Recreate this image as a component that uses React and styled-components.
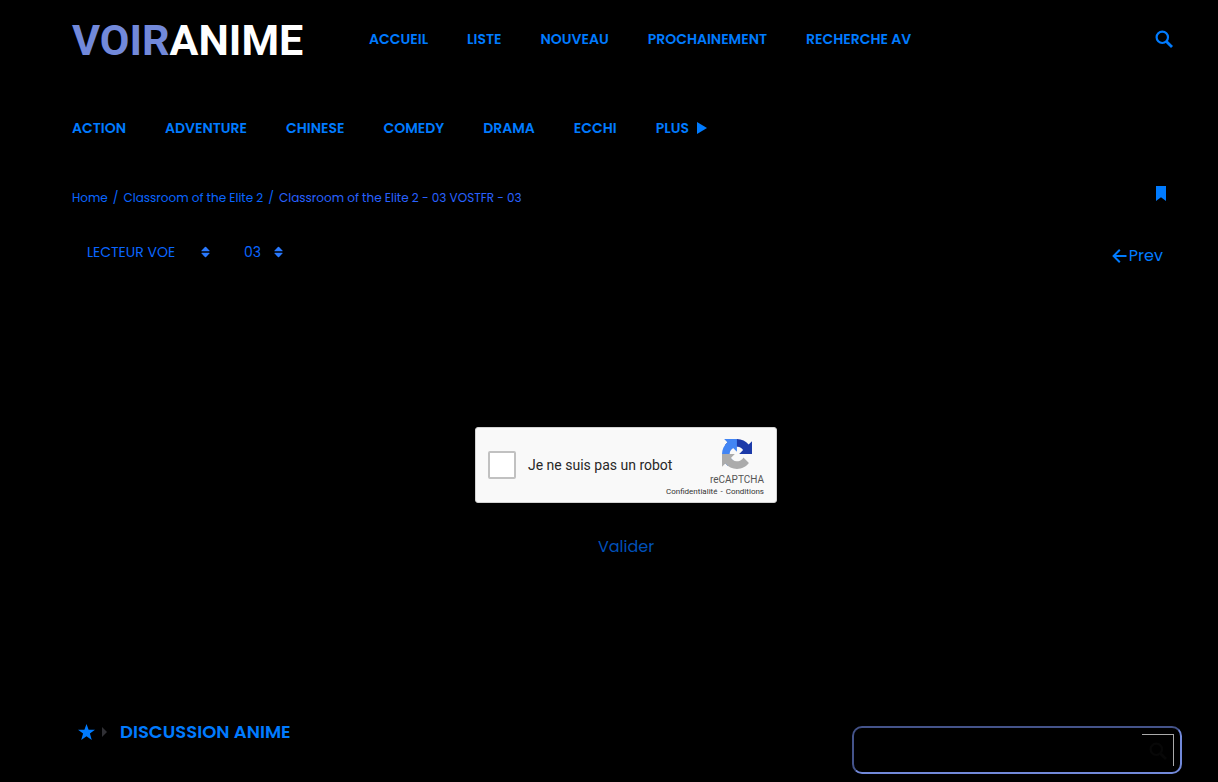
import React from "react";
import styled, { createGlobalStyle } from "styled-components";

const GlobalStyle = createGlobalStyle`
  * { box-sizing: border-box; }
  body {
    margin: 0;
    background: #000;
    color: #007bff;
    font-family: Poppins, Inter, "Open Sans", sans-serif;
    font-size: 14px;
  }
  a { color: inherit; text-decoration: none; }
  button, select, input { font: inherit; color: inherit; }
`;

const Page = styled.div`
  padding: 0 36px 0 72px;
`;

const Header = styled.header`
  display: flex;
  align-items: center;
  height: 78px;
`;

const Logo = styled.a`
  width: 232px;
  margin-right: 65px;
  padding-top: 2px;
  font-family: Roboto, sans-serif;
  font-size: 43px;
  line-height: 52px;
  font-weight: 700;
  color: #fff;
  white-space: nowrap;
`;

const LogoAccent = styled.span`
  color: #7289da;
`;

const Menu = styled.nav`
  display: flex;
  align-items: center;
  gap: 39px;
  font-size: 14px;
  line-height: 20px;
  font-weight: 600;
  white-space: nowrap;
`;

const GenreBar = styled.div`
  display: flex;
  align-items: center;
  height: 100px;
`;

const MoreLink = styled.a`
  display: flex;
  align-items: center;
  gap: 8px;
`;

const IconButton = styled.button`
  display: flex;
  padding: 0;
  border: 0;
  background: none;
  cursor: pointer;
`;

const SearchToggle = styled(IconButton)`
  margin: 0 9px 0 auto;
`;

const TitleBar = styled.div`
  display: flex;
  justify-content: space-between;
  align-items: flex-start;
  height: 54px;
  padding: 8px 16px 0 0;
`;

const Breadcrumb = styled.nav`
  display: flex;
  gap: 5px;
  padding-top: 2px;
  font-size: 12px;
  line-height: 20px;
  color: #0a66ff;
`;

const Current = styled.span`
  color: #2962ff;
`;

const PlayerBar = styled.div`
  display: flex;
  align-items: flex-start;
  gap: 9px;
  padding-right: 19px;
`;

const SelectBox = styled.label`
  display: grid;
  align-items: center;
  width: ${(p) => p.$width};
  height: 40px;

  > * { grid-area: 1 / 1; }
  > svg { justify-self: end; margin-right: 10px; pointer-events: none; }
`;

const Select = styled.select`
  appearance: none;
  width: 100%;
  height: 40px;
  padding: 0 0 0 15px;
  border: 0;
  background: #000;
  color: #0a66ff;
  font-size: 14px;
`;

const PrevLink = styled.a`
  display: flex;
  align-items: center;
  gap: 2px;
  margin: 12px 0 0 auto;
  font-size: 16px;
  line-height: 24px;
`;

const Player = styled.form`
  display: flex;
  flex-direction: column;
  align-items: center;
  gap: 32px;
  padding: 155px 2px 160px 0;
`;

const Captcha = styled.div`
  display: flex;
  width: 302px;
  height: 76px;
  padding: 0 12px;
  border: 1px solid #d3d3d3;
  border-radius: 3px;
  background: #f9f9f9;
  color: #282727;
  font-family: Roboto, sans-serif;
`;

const CaptchaLabel = styled.label`
  display: flex;
  align-items: center;
  gap: 12px;
  font-size: 14px;
  line-height: 18px;
  white-space: nowrap;
`;

const CaptchaCheck = styled.input`
  appearance: none;
  width: 28px;
  height: 28px;
  margin: 0;
  border: 2px solid #c1c1c1;
  border-radius: 2px;
  background: #fff;
`;

const CaptchaBrand = styled.div`
  display: flex;
  flex-direction: column;
  align-items: flex-end;
  margin-left: auto;
  padding-top: 11px;
  color: #555;

  > svg { margin-right: 12px; }
`;

const BrandName = styled.span`
  margin-top: 5px;
  font-size: 10px;
  line-height: 12px;
`;

const Legal = styled.span`
  display: flex;
  gap: 3px;
  width: max-content;
  margin-left: -60px;
  font-size: 8px;
  line-height: 12px;
  color: #333;
`;

const Submit = styled.button`
  padding: 0;
  border: 0;
  background: none;
  font-size: 16px;
  line-height: 24px;
  color: #0050b8;
`;

const Footer = styled.footer`
  display: flex;
  justify-content: space-between;
  align-items: flex-start;
`;

const Heading = styled.h2`
  display: flex;
  align-items: center;
  margin: 0;
  padding: 0 0 0 6px;
  font-size: 18px;
  line-height: 26px;
  font-weight: 600;

  > svg:first-child { margin-right: 7px; }
  > svg:nth-child(2) { margin-right: 13px; }
`;

const SearchBox = styled.div`
  display: flex;
  width: 330px;
  height: 48px;
  margin-top: 7px;
  padding: 6px;
  border: 2px solid;
  border-color: #44538a #7289da #7289da #44538a;
  border-radius: 10px;
`;

const SearchInput = styled.input`
  flex: 1;
  min-width: 0;
  border: 0;
  outline: 0;
  background: transparent;
`;

const SearchSubmit = styled.button`
  display: grid;
  place-items: center;
  width: 32px;
  height: 32px;
  padding: 0;
  border: 0 solid #aaa;
  border-width: 1px 1px 0 0;
  background: #000;
  color: #070707;
`;

const SearchIcon = () => (
  <svg width="18" height="18" viewBox="0 0 18 18" fill="none" stroke="currentColor" strokeWidth="2.2" aria-hidden="true">
    <circle cx="7.3" cy="7.3" r="5.7" />
    <path d="M11.4 11.4L17 17" strokeWidth="2.8" />
  </svg>
);

const SortIcon = () => (
  <svg width="9" height="12" viewBox="0 0 10 12" fill="#2979ff" aria-hidden="true">
    <path d="M1 5.2Q0 5.2 .6 4.3L4.4.5Q5 0 5.6.5L9.4 4.3Q10 5.2 9 5.2ZM1 6.8Q0 6.8.6 7.7L4.4 11.5Q5 12 5.6 11.5L9.4 7.7Q10 6.8 9 6.8Z" />
  </svg>
);

const CaptchaLogo = () => (
  <svg width="30" height="30" viewBox="0 0 64 64" aria-hidden="true">
    <path fill="#1c3aa9" d="M64 31.955l-.033-1.37V4.687l-7.16 7.16C50.948 4.674 42.033.093 32.05.093c-10.4 0-19.622 4.96-25.458 12.64l11.736 11.86a15.55 15.55 0 0 1 4.754-5.334c2.05-1.6 4.952-2.906 8.968-2.906.485 0 .86.057 1.135.163 4.976.393 9.288 3.14 11.828 7.124l-8.307 8.307L64 31.953" />
    <path fill="#4285f4" d="M31.862.094l-1.37.033H4.594l7.16 7.16C4.58 13.147 0 22.06 0 32.046c0 10.4 4.96 19.622 12.64 25.458L24.5 45.768a15.55 15.55 0 0 1-5.334-4.754c-1.6-2.05-2.906-4.952-2.906-8.968 0-.485.057-.86.163-1.135.393-4.976 3.14-9.288 7.124-11.828l8.307 8.307L31.86.095" />
    <path fill="#ababab" d="M.001 32.045l.033 1.37v25.898l7.16-7.16c5.86 7.173 14.774 11.754 24.76 11.754 10.4 0 19.622-4.96 25.458-12.64l-11.736-11.86a15.55 15.55 0 0 1-4.754 5.334c-2.05 1.6-4.952 2.906-8.968 2.906-.485 0-.86-.057-1.135-.163-4.976-.393-9.288-3.14-11.828-7.124l8.307-8.307c-10.522.04-22.4.066-27.295-.005" />
  </svg>
);

const mainLinks = ["ACCUEIL", "LISTE", "NOUVEAU", "PROCHAINEMENT", "RECHERCHE AV"];
const genres = ["ACTION", "ADVENTURE", "CHINESE", "COMEDY", "DRAMA", "ECCHI"];

export default function App() {
  return (
    <>
      <GlobalStyle />
      <Page>
        <Header>
          <Logo href="#"><LogoAccent>VOIR</LogoAccent>ANIME</Logo>
          <Menu>
            {mainLinks.map((t) => <a key={t} href="#">{t}</a>)}
          </Menu>
          <SearchToggle type="button" aria-label="Recherche"><SearchIcon /></SearchToggle>
        </Header>

        <GenreBar>
          <Menu>
            {genres.map((t) => <a key={t} href="#">{t}</a>)}
            <MoreLink href="#">
              PLUS
              <svg width="10" height="12" viewBox="0 0 10 12" fill="currentColor" aria-hidden="true"><path d="M0 0L10 6L0 12Z" /></svg>
            </MoreLink>
          </Menu>
        </GenreBar>

        <TitleBar>
          <Breadcrumb>
            <a href="#">Home</a>
            <span>/</span>
            <a href="#">Classroom of the Elite 2</a>
            <span>/</span>
            <Current>Classroom of the Elite 2 - 03 VOSTFR - 03</Current>
          </Breadcrumb>
          <IconButton type="button" aria-label="Bookmark">
            <svg width="10" height="15" viewBox="0 0 10 15" fill="currentColor" aria-hidden="true"><path d="M0 0H10V15L5 11.2L0 15Z" /></svg>
          </IconButton>
        </TitleBar>

        <PlayerBar>
          <SelectBox $width="148px">
            <Select aria-label="Lecteur"><option>LECTEUR VOE</option></Select>
            <SortIcon />
          </SelectBox>
          <SelectBox $width="64px">
            <Select aria-label="Episode"><option>03</option></Select>
            <SortIcon />
          </SelectBox>
          <PrevLink href="#">
            <svg width="15" height="14" viewBox="0 0 15 14" fill="none" stroke="currentColor" strokeWidth="2" aria-hidden="true"><path d="M14.5 7H1.6M7.8.8L1.6 7L7.8 13.2" /></svg>
            Prev
          </PrevLink>
        </PlayerBar>

        <Player onSubmit={(e) => e.preventDefault()}>
          <Captcha>
            <CaptchaLabel>
              <CaptchaCheck type="checkbox" />
              Je ne suis pas un robot
            </CaptchaLabel>
            <CaptchaBrand>
              <CaptchaLogo />
              <BrandName>reCAPTCHA</BrandName>
              <Legal><a href="#">Confidentialité</a><span>-</span><a href="#">Conditions</a></Legal>
            </CaptchaBrand>
          </Captcha>
          <Submit type="submit" disabled>Valider</Submit>
        </Player>

        <Footer>
          <Heading>
            <svg width="17" height="16" viewBox="0 0 17 16" fill="currentColor" aria-hidden="true"><path d="M8.5 0L10.6 5.8H17L11.9 9.6L13.8 16L8.5 12.2L3.2 16L5.1 9.6L0 5.8H6.4Z" /></svg>
            <svg width="5" height="10" viewBox="0 0 5 10" fill="#303035" aria-hidden="true"><path d="M0 0L5 5L0 10Z" /></svg>
            DISCUSSION ANIME
          </Heading>
          <SearchBox>
            <SearchInput type="search" aria-label="Recherche" />
            <SearchSubmit type="submit" aria-label="Lancer la recherche"><SearchIcon /></SearchSubmit>
          </SearchBox>
        </Footer>
      </Page>
    </>
  );
}
